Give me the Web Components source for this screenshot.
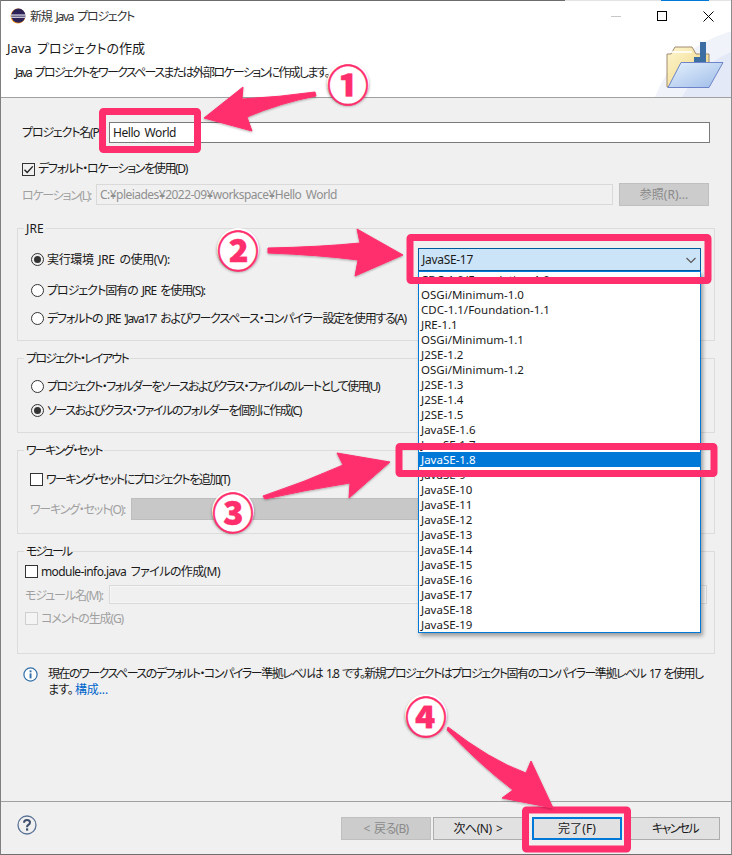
<!DOCTYPE html>
<html lang="ja">
<head>
<meta charset="utf-8">
<title>新規 Java プロジェクト</title>
<style>
  html, body { margin: 0; padding: 0; background: #f0f0f0; }
  body { font: 12px/16px "Noto Sans", "Noto Sans CJK JP", sans-serif; color: #1a1a1a; font-feature-settings: "palt"; }
</style>
</head>
<body>

<wizard-window>
  <title-bar slot="top"><fit-text w="104">新規 Java プロジェクト</fit-text></title-bar>
  <wizard-header slot="top">
    <fit-text slot="heading" w="138">Java プロジェクトの作成</fit-text>
    <fit-text w="314">Java プロジェクトをワークスペースまたは外部ロケーションに作成します。</fit-text>
  </wizard-header>

  <form-row label-width="87" style="margin:24px 21px 0">
    <fit-text slot="label" w="81">プロジェクト名(P):</fit-text>
    <text-field style="flex:1"><fit-text w="63">Hello World</fit-text></text-field>
  </form-row>
  <check-box checked style="margin:18px 0 0 21px"><fit-text w="149">デフォルト・ロケーションを使用(D)</fit-text></check-box>
  <form-row label-width="74" disabled style="margin:6px 21px 0;height:23px">
    <fit-text slot="label" w="69" style="--nudge:2px">ロケーション(L):</fit-text>
    <text-field disabled style="flex:1;margin-right:6px"><fit-text w="237">C:¥pleiades¥2022-09¥workspace¥Hello World</fit-text></text-field>
    <push-button disabled style="margin-right:1px">参照(R)...</push-button>
  </form-row>

  <group-box style="margin-top:13px">
    <fit-text slot="legend" w="18">JRE</fit-text>
    <div style="display:flex;height:23px;margin-top:11px;padding:0 13px">
      <radio-button checked style="margin-top:3px"><fit-text w="123">実行環境 JRE の使用(V):</fit-text></radio-button>
      <combo-box selected="JavaSE-1.8" style="margin-left:auto"><fit-text w="51" style="--nudge:0px">JavaSE-17</fit-text></combo-box>
    </div>
    <radio-button style="margin:11px 0 0 13px"><fit-text w="158">プロジェクト固有の JRE を使用(S):</fit-text></radio-button>
    <radio-button style="margin:12px 0 14px 13px"><fit-text w="359">デフォルトの JRE 'Java17' およびワークスペース・コンパイラー設定を使用する(A)</fit-text></radio-button>
  </group-box>

  <group-box style="margin-top:8px">
    <fit-text slot="legend" w="102">プロジェクト・レイアウト</fit-text>
    <radio-button style="margin:11px 0 0 13px"><fit-text w="332">プロジェクト・フォルダーをソースおよびクラス・ファイルのルートとして使用(U)</fit-text></radio-button>
    <radio-button checked style="margin:8px 0 14px 13px"><fit-text w="254">ソースおよびクラス・ファイルのフォルダーを個別に作成(C)</fit-text></radio-button>
  </group-box>

  <group-box style="margin-top:8px">
    <fit-text slot="legend" w="76">ワーキング・セット</fit-text>
    <check-box style="margin:12px 0 0 12px"><fit-text w="183">ワーキング・セットにプロジェクトを追加(T)</fit-text></check-box>
    <form-row label-width="101" disabled style="margin:11px 0 13px 12px">
      <fit-text slot="label" w="95">ワーキング・セット(O):</fit-text>
      <div style="width:420px;height:22px;background:#c8c8c8;border:1px solid #bdbdbd;box-sizing:border-box"></div>
    </form-row>
  </group-box>

  <group-box style="margin-top:8px">
    <fit-text slot="legend" w="45">モジュール</fit-text>
    <check-box style="margin:3px 0 0 7px"><fit-text w="179">module-info.java ファイルの作成(M)</fit-text></check-box>
    <form-row label-width="84" disabled style="margin:6px 7px 0 7px">
      <fit-text slot="label" w="78">モジュール名(M):</fit-text>
      <text-field disabled blank style="flex:1;height:19px"></text-field>
    </form-row>
    <check-box disabled style="margin:6px 0 27px 7px"><fit-text w="82">コメントの生成(G)</fit-text></check-box>
  </group-box>

  <info-note style="margin:12px 24px 0 22px">
    <fit-text w="655">現在のワークスペースのデフォルト・コンパイラー準拠レベルは 1.8 です。新規プロジェクトはプロジェクト固有のコンパイラー準拠レベル 17 を使用し</fit-text><br>
    <fit-text w="25">ます。</fit-text><a slot="link"><fit-text w="33">構成...</fit-text></a></info-note>

  <button-bar slot="bottom">
    <push-button disabled><fit-text w="45">&lt; 戻る(B)</fit-text></push-button>
    <push-button style="margin-left:2px"><fit-text w="49">次へ(N) &gt;</fit-text></push-button>
    <push-button primary style="margin-left:9px"><fit-text w="38">完了(F)</fit-text></push-button>
    <push-button style="margin-left:8px"><fit-text w="46">キャンセル</fit-text></push-button>
  </button-bar>

  <step-annotations slot="overlay"></step-annotations>
</wizard-window>

<script>
function defineSimple(name, css, html, extra) {
  const template = document.createElement('template');
  template.innerHTML = `<style>${css}</style>${html}`;
  class Simple extends HTMLElement {
    constructor() {
      super();
      this.attachShadow({ mode: 'open' });
      this.shadowRoot.appendChild(template.content.cloneNode(true));
    }
    connectedCallback() {
      if (extra) extra(this, this.shadowRoot);
    }
  }
  customElements.define(name, Simple);
}

// Noto's kana are wider than the dialog font, so each label is squeezed to the width it has in the dialog
defineSimple('fit-text', `:host { display: inline-block; white-space: nowrap; word-spacing: 2px; padding-top: var(--nudge, 0px); }`, `<slot></slot>`);

defineSimple('wizard-window', `
  :host { display: flex; flex-direction: column; position: relative; width: 732px; height: 855px; box-sizing: border-box;
          border-left: 1px solid #7f7f7f; border-right: 1px solid #8c8c8c; border-bottom: 1px solid #6f6f6f; background: #f0f0f0; overflow: hidden; }
  .body { display: flex; flex-direction: column; flex: 1; min-height: 0; }
`, `
  <slot name="top"></slot>
  <div class="body"><slot></slot></div>
  <slot name="bottom"></slot>
  <slot name="overlay"></slot>
`);

defineSimple('title-bar', `
  :host { display: flex; align-items: center; height: 32px; box-sizing: border-box; background: #fff; padding-bottom: 1px;
          border-top: 1px solid; border-image: linear-gradient(to right, #6d6d6d 563px, #e4e4e4 563px, #e4e4e4 659px, #0078d7 659px, #0078d7 707px, #e4e4e4 707px) 1; }
  svg.logo { margin: 0 4px 0 9px; flex: none; }
  .title { flex: 1; color: #333; padding-top: 1px; }
  .ctl { width: 46px; height: 30px; display: flex; align-items: center; justify-content: center; }
`, `
  <svg class="logo" width="16" height="16" viewBox="0 0 16 16">
    <circle cx="8" cy="8" r="7.4" fill="#f7941e"/>
    <circle cx="8.4" cy="7.7" r="7.1" fill="#2c2255"/>
    <rect x="1" y="6.4" width="15" height="1.3" fill="#d9d6e6"/>
    <rect x="1" y="8.6" width="15" height="1.3" fill="#d9d6e6"/>
  </svg>
  <span class="title"><slot></slot></span>
  <span class="ctl"><svg width="10" height="10"><rect x="0" y="5" width="10" height="1" fill="#c8c8c8"/></svg></span>
  <span class="ctl"><svg width="10" height="10"><rect x=".5" y=".5" width="9" height="9" fill="none" stroke="#000"/></svg></span>
  <span class="ctl"><svg width="11" height="11"><path d="M.5 .5 L10.5 10.5 M10.5 .5 L.5 10.5" stroke="#000" fill="none"/></svg></span>
`);

defineSimple('wizard-header', `
  :host { display: flex; height: 66px; box-sizing: border-box; background: #fff; border-bottom: 1px solid #a0a0a0; }
  .text { flex: 1; padding: 8px 0 0 6px; }
  h1 { font: inherit; font-size: 13px; margin: 0; line-height: 16px; }
  p { margin: 9px 0 0 8px; line-height: 16px; }
  svg { flex: none; }
`, `
  <div class="text"><h1><slot name="heading"></slot></h1><p><slot></slot></p></div>
  <svg width="111" height="65" viewBox="620 32 111 65">
    <defs>
      <linearGradient id="back" x1="0" y1="0" x2="1" y2="1"><stop offset="0" stop-color="#fdf6d0"/><stop offset="1" stop-color="#efd27a"/></linearGradient>
      <linearGradient id="front" x1="0" y1="0" x2="1" y2="1"><stop offset="0" stop-color="#e6f2fd"/><stop offset="1" stop-color="#9dbbe8"/></linearGradient>
    </defs>
    <path d="M655 97 Q672 50 731 31 V97 Z" fill="#f1f3fb"/>
    <path d="M682 97 Q700 65 731 52 V97 Z" fill="#e4e9f7"/>
    <path d="M667 87 V54 L671 54 L675 47 L692 47 L696 54 L709 54 V87 Z" fill="url(#back)" stroke="#a08a70"/>
    <path d="M669 52 H692" stroke="#fff" stroke-width="2" opacity=".8"/>
    <path d="M700 42 H706 V62 H694 V57 H700 Z" fill="#3c6ea4"/>
    <path d="M681 62.5 H723 L709 87.5 H668 Z" fill="url(#front)" stroke="#6d85c8"/>
  </svg>
`);

defineSimple('form-row', `
  :host { display: flex; align-items: center; }
  label { flex: none; white-space: nowrap; }
  :host([disabled]) label { color: #a0a0a0; }
`, `<label id="l"><slot name="label"></slot></label><slot></slot>`, (el, root) => {
  root.getElementById('l').style.width = el.getAttribute('label-width') + 'px';
});

defineSimple('text-field', `
  :host { display: block; height: 21px; box-sizing: border-box; border: 1px solid #7a7a7a; background: #fff; padding: 1px 3px; line-height: 17px; white-space: nowrap; overflow: hidden; }
  :host([disabled]) { border: 1px solid #d9d9d9; background: #f0f0f0; color: #8f8f8f; }
  :host([blank]) { box-shadow: inset 0 0 0 1px #f6f6f6; }
`, `<slot></slot>`);

defineSimple('check-box', `
  :host { display: flex; align-items: center; height: 16px; white-space: nowrap; }
  .box { width: 13px; height: 13px; box-sizing: border-box; border: 1px solid #333; background: #fff; margin-right: 3px; flex: none; display: flex; }
  svg { display: none; }
  :host([checked]) .box { background: #f0f0f0; }
  :host([checked]) svg { display: block; }
  :host([disabled]) { color: #a0a0a0; }
  :host([disabled]) .box { border-color: #cfcfcf; background: #f4f4f4; }
`, `
  <span class="box"><svg width="11" height="11"><path d="M1.5 5.8 L4.2 8.5 L9.8 2.4" fill="none" stroke="#222" stroke-width="1.4"/></svg></span>
  <slot></slot>
`);

defineSimple('radio-button', `
  :host { display: flex; align-items: center; height: 16px; white-space: nowrap; }
  .dot { width: 13px; height: 13px; box-sizing: border-box; border: 1px solid #333; border-radius: 50%; background: #fff; margin-right: 3px; flex: none; display: flex; align-items: center; justify-content: center; }
  i { width: 7px; height: 7px; border-radius: 50%; background: #333; display: none; }
  :host([checked]) i { display: block; }
  :host([checked]) .dot { background: #f0f0f0; }
`, `<span class="dot"><i></i></span><slot></slot>`);

defineSimple('group-box', `
  :host { display: block; margin: 0 16px; --nudge: 2px; }
  fieldset { margin: 0; padding: 0; border: 1px solid #dcdcdc; min-width: 0; }
  legend { margin-left: 6px; padding: 0 2px; line-height: 16px; }
`, `<fieldset><legend><slot name="legend"></slot></legend><slot></slot></fieldset>`);

defineSimple('push-button', `
  :host { display: flex; align-items: center; justify-content: center; width: 90px; height: 23px; box-sizing: border-box; flex: none;
          border: 1px solid #adadad; background: #e1e1e1; white-space: nowrap; }
  :host([disabled]) { background: #ccc; border-color: #bfbfbf; color: #8a8a8a; }
  :host([primary]) { border: 2px solid #0078d7; }
`, `<slot></slot>`);

defineSimple('button-bar', `
  :host { display: flex; align-items: flex-start; height: 53px; box-sizing: border-box; border-top: 1px solid #a0a0a0; padding: 15px 11px 0 16px; }
  svg { flex: none; margin: -2px 0 0 0; }
  .gap { flex: 1; }
`, `
  <svg width="20" height="20" viewBox="0 0 20 20">
    <circle cx="10" cy="10" r="9" fill="none" stroke="#5a7396" stroke-width="1.3"/>
    <path d="M7 7.8 Q7 5 10 5 Q13 5 13 7.6 Q13 9.2 11.2 10 Q10 10.6 10 12.2" fill="none" stroke="#3d4f6c" stroke-width="2"/>
    <rect x="9" y="13.4" width="2.2" height="2.2" fill="#3d4f6c"/>
  </svg>
  <span class="gap"></span><slot></slot>
`);

defineSimple('info-note', `
  :host { display: flex; line-height: 16px; }
  svg { flex: none; margin: 1px 10px 0 0; }
  ::slotted(a) { color: #0066cc; text-decoration: underline; margin-left: 2px; }
`, `
  <svg width="15" height="15" viewBox="0 0 15 15">
    <circle cx="7.5" cy="7.5" r="6.6" fill="#fff" stroke="#2f6ea8" stroke-width="1.2"/>
    <rect x="6.6" y="6.4" width="1.9" height="5" fill="#2f6ea8"/>
    <rect x="6.6" y="3.4" width="1.9" height="1.9" fill="#2f6ea8"/>
  </svg>
  <div><slot></slot><slot name="link"></slot></div>
`);

// the open drop-down list lies over the groups below it
const levels = ['CDC-1.0/Foundation-1.0', 'OSGi/Minimum-1.0', 'CDC-1.1/Foundation-1.1', 'JRE-1.1', 'OSGi/Minimum-1.1', 'J2SE-1.2', 'OSGi/Minimum-1.2',
  'J2SE-1.3', 'J2SE-1.4', 'J2SE-1.5', 'JavaSE-1.6', 'JavaSE-1.7', 'JavaSE-1.8', 'JavaSE-9', 'JavaSE-10', 'JavaSE-11', 'JavaSE-12', 'JavaSE-13',
  'JavaSE-14', 'JavaSE-15', 'JavaSE-16', 'JavaSE-17', 'JavaSE-18', 'JavaSE-19'];

defineSimple('combo-box', `
  :host { display: block; position: relative; width: 283px; height: 23px; flex: none; z-index: 5; }
  .face { display: flex; align-items: center; justify-content: space-between; height: 23px; box-sizing: border-box; border: 1px solid #005a9e; background: #cce4f7; padding: 0 3px; }
  .list { position: absolute; top: 23px; left: 0; width: 283px; height: 362px; box-sizing: border-box; background: #fff; border: 1px solid #0078d7; box-shadow: 2px 3px 4px rgba(0,0,0,.35); overflow: hidden; font-size: 11.5px; }
  .item { height: 15px; line-height: 15px; padding-left: 2px; white-space: nowrap; }
  .item.on { background: #0078d7; color: #fff; }
`, `
  <div class="face"><slot></slot><svg width="12" height="12"><path d="M1.5 4 L6 8.5 L10.5 4" fill="none" stroke="#555" stroke-width="1.1"/></svg></div>
  <div class="list" id="list"></div>
`, (el, root) => {
  const list = root.getElementById('list');
  levels.forEach(name => {
    const d = document.createElement('div');
    d.className = 'item' + (name === el.getAttribute('selected') ? ' on' : '');
    d.textContent = name;
    list.appendChild(d);
  });
});

// pink marks drawn over the dialog: boxes, arrows and numbered badges
defineSimple('step-annotations', `
  :host { position: absolute; left: -1px; top: 0; width: 732px; height: 855px; z-index: 20; pointer-events: none; display: block; }
  svg { position: absolute; left: 0; top: 0; }
  .badge { position: absolute; width: 42px; height: 42px; margin: -21px 0 0 -21px; border-radius: 50%; background: #fff; box-shadow: 0 2px 3px rgba(0,0,0,.4);
           display: flex; align-items: center; justify-content: center; color: #ff2f6d; font: 900 42px/42px "Noto Sans CJK JP", sans-serif; -webkit-text-stroke: .3px #ff2f6d; }
`, `
  <svg width="732" height="855" viewBox="0 0 732 855">
    <defs><filter id="s" x="-10%" y="-10%" width="120%" height="130%"><feDropShadow dx="0" dy="1" stdDeviation="1" flood-color="#000" flood-opacity=".3"/></filter></defs>
    <g fill="none" stroke="#ff2f6d" stroke-width="7" stroke-linejoin="round">
      <rect x="102.500" y="111.500" width="95" height="38" rx="1"/>
      <rect x="410" y="237.500" width="298" height="43" rx="1"/>
      <rect x="399" y="446.500" width="315" height="27" rx="1"/>
      <rect x="525.500" y="810" width="102" height="39" rx="1"/>
    </g>
    <g fill="#ff2f6d" stroke="#ff2f6d" stroke-width="1" stroke-linejoin="round" filter="url(#s)">
      <path d="M315 92 Q280 97 242 99 L243 87 L204 118 L252 131 L247 117 Q280 103 316 96 Z"/>
      <path d="M268 248 Q320 247 360 243 L357 229 L403 255 L355 276 L358 260 Q320 255 268 253 Z"/>
      <path d="M263 496 Q305 482 343 465 L337 453 L390 462 L349 498 L350 483 Q305 490 265 499 Z"/>
      <path d="M448 727 Q490 760 526 773 L531 761 L553 808 L502 798 L513 790 Q480 765 447 730 Z"/>
    </g>
  </svg>
  <span class="badge" style="left:348px;top:83px">①</span>
  <span class="badge" style="left:238px;top:249px">②</span>
  <span class="badge" style="left:233px;top:511px">③</span>
  <span class="badge" style="left:426px;top:715px">④</span>
`);

// everything is defined and laid out now, so the squeezes can be measured
document.querySelectorAll('fit-text').forEach(el => {
  const now = el.getBoundingClientRect().width;
  const spacing = (Number(el.getAttribute('w')) - now) / el.textContent.length;
  el.style.letterSpacing = spacing.toFixed(2) + 'px';
});
</script>
</body>
</html>
